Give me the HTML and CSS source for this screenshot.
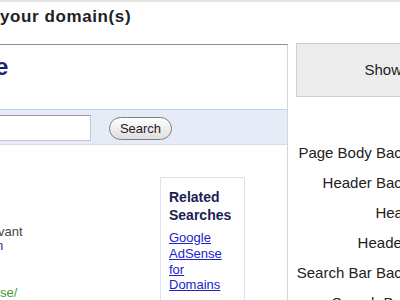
FILE: index.html
```html
<!DOCTYPE html>
<html>
<head>
<meta charset="utf-8">
<link rel="stylesheet" href="styles.css">
</head>
<body>
<div class="topstrip"></div>
<h1 class="title">your domain(s)</h1>
<div class="main">
  <div class="preview">
    <div class="pv-header"><span class="pv-domain">e</span></div>
    <div class="pv-searchbar">
      <div class="pv-input"></div>
      <div class="pv-button">Search</div>
    </div>
    <div class="pv-content">
      <div class="listing">
        <div class="l-desc">vant</div>
        <div class="l-link">n</div>
        <div class="l-url">se/</div>
      </div>
      <div class="related">
        <div class="rel-title">Related Searches</div>
        <a class="rel-link" href="#">Google AdSense for Domains</a>
      </div>
    </div>
  </div>
  <div class="panel">
    <div class="show-btn">Show Preview</div>
    <div class="labels">
      <div class="label">Page Body Background</div>
      <div class="label">Header Background</div>
      <div class="label">Header Text</div>
      <div class="label">Header Border</div>
      <div class="label">Search Bar Background</div>
      <div class="label">Search Bar Border</div>
    </div>
  </div>
</div>
</body>
</html>
```
FILE: styles.css
```css
html, body {
  margin: 0;
  padding: 0;
  width: 400px;
  height: 300px;
  overflow: hidden;
  background: #fff;
  font-family: "Liberation Sans", Arial, sans-serif;
}
.topstrip {
  height: 2px;
  background: #e6e6e6;
}
.title {
  margin: 0;
  height: 41px;
  box-sizing: border-box;
  padding-top: 5px;
  font-size: 17px;
  line-height: 20px;
  font-weight: bold;
  letter-spacing: 0.6px;
  color: #222;
}
.main {
  display: flex;
  align-items: flex-start;
}
.preview {
  width: 297px;
  margin-left: -10px;
  margin-top: 1px;
  height: 300px;
  border-top: 1px solid #8e8e8e;
  border-right: 1px solid #d4d4d4;
  flex: none;
}
.pv-header {
  height: 64px;
  box-sizing: border-box;
  padding-top: 8px;
  padding-left: 5px;
}
.pv-domain {
  font-size: 24px;
  line-height: 28px;
  font-weight: bold;
  color: #1c1c78;
}
.pv-searchbar {
  height: 36px;
  box-sizing: border-box;
  background: #e5ecf8;
  border-top: 1px solid #c4d2ec;
  border-bottom: 1px solid #d3ddef;
  display: flex;
  align-items: flex-start;
  padding-top: 5px;
}
.pv-input {
  width: 101px;
  height: 26px;
  box-sizing: border-box;
  background: #fff;
  border: 1px solid #c8c8c8;
  border-top-color: #9a9a9a;
}
.pv-button {
  margin-left: 18px;
  margin-top: 2px;
  width: 63px;
  height: 23px;
  box-sizing: border-box;
  border: 1px solid #7e7e7e;
  border-radius: 12px;
  background: linear-gradient(#ffffff, #dedede);
  font-size: 13px;
  line-height: 21px;
  text-align: center;
  color: #222;
}
.pv-content {
  display: flex;
  align-items: flex-start;
}
.listing {
  width: 170px;
  flex: none;
  padding-top: 80px;
  font-size: 13px;
  line-height: 14px;
}
.l-desc {
  color: #444;
  margin-left: 8px;
}
.l-link {
  color: #2b3396;
  margin-left: 6px;
}
.l-url {
  color: #3d9a3d;
  margin-top: 33px;
  margin-left: 10px;
}
.related {
  margin-top: 32px;
  width: 85px;
  height: 140px;
  box-sizing: border-box;
  border: 1px solid #dde3ee;
  padding: 10px 6px 0 8px;
}
.rel-title {
  font-size: 14px;
  line-height: 18px;
  font-weight: bold;
  color: #1d1d55;
}
.rel-link {
  display: block;
  margin-top: 6px;
  font-size: 13px;
  line-height: 15.8px;
  color: #2222cc;
  text-decoration: underline;
}
.panel {
  flex: none;
  padding-left: 8px;
  width: 240px;
}
.show-btn {
  width: 232px;
  height: 54px;
  box-sizing: border-box;
  background: #ececec;
  border: 1px solid #cfcfcf;
  font-size: 15px;
  line-height: 52px;
  text-align: center;
  color: #222;
}
.labels {
  margin-top: 41px;
  width: 160px;
}
.label {
  height: 30px;
  line-height: 30px;
  font-size: 15px;
  text-align: right;
  white-space: nowrap;
  color: #222;
}
```
